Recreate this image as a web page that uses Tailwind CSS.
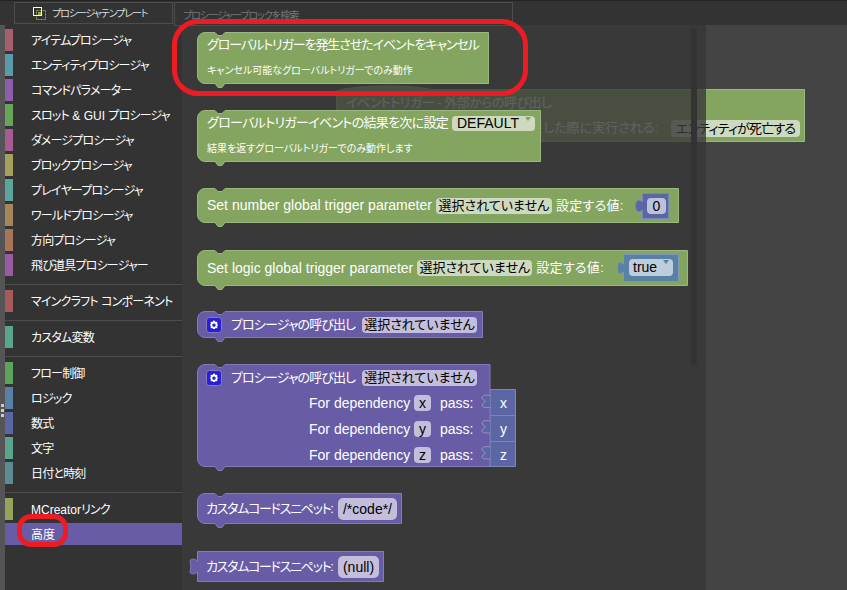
<!DOCTYPE html>
<html lang="ja">
<head>
    <meta charset="UTF-8">
    <title>Procedure blocks</title>
    <script src="https://cdn.jsdelivr.net/npm/@tailwindcss/browser@4"></script>
</head>
<body class="bg-[#333333] font-['Liberation_Sans','Noto_Sans_CJK_JP',sans-serif] [font-feature-settings:'palt']">
<div class="relative flex w-[847px] h-[590px] overflow-hidden">

    <!-- left strip -->
    <div class="relative w-[5px] shrink-0 bg-[#555555]">
        <div class="absolute left-[1px] top-[404px] flex flex-col gap-[2px]">
            <span class="block w-[3px] h-[3px] bg-[#cccccc]"></span>
            <span class="block w-[3px] h-[3px] bg-[#cccccc]"></span>
            <span class="block w-[3px] h-[3px] bg-[#cccccc]"></span>
        </div>
    </div>

    <!-- palette -->
    <div class="w-[177px] shrink-0 flex flex-col whitespace-pre text-white text-[12px] leading-[24px] tracking-[-0.8px]">
        <div class="h-[29px] shrink-0"></div>
        <div class="flex flex-col gap-[3px]">
            <div class="flex h-[22px]"><span class="w-[8px] shrink-0 bg-[#a5606b]"></span><span class="ml-[18px]">アイテムプロシージャ</span></div>
            <div class="flex h-[22px]"><span class="w-[8px] shrink-0 bg-[#5b9aa8]"></span><span class="ml-[18px]">エンティティプロシージャ</span></div>
            <div class="flex h-[22px]"><span class="w-[8px] shrink-0 bg-[#8c5fa8]"></span><span class="ml-[18px]">コマンドパラメーター</span></div>
            <div class="flex h-[22px]"><span class="w-[8px] shrink-0 bg-[#67a55b]"></span><span class="ml-[18px]">スロット<span class="tracking-normal"> &amp; GUI </span>プロシージャ</span></div>
            <div class="flex h-[22px]"><span class="w-[8px] shrink-0 bg-[#a55b93]"></span><span class="ml-[18px]">ダメージプロシージャ</span></div>
            <div class="flex h-[22px]"><span class="w-[8px] shrink-0 bg-[#a5a05b]"></span><span class="ml-[18px]">ブロックプロシージャ</span></div>
            <div class="flex h-[22px]"><span class="w-[8px] shrink-0 bg-[#5ba59b]"></span><span class="ml-[18px]">プレイヤープロシージャ</span></div>
            <div class="flex h-[22px]"><span class="w-[8px] shrink-0 bg-[#a5875b]"></span><span class="ml-[18px]">ワールドプロシージャ</span></div>
            <div class="flex h-[22px]"><span class="w-[8px] shrink-0 bg-[#a5745b]"></span><span class="ml-[18px]">方向プロシージャ</span></div>
            <div class="flex h-[22px]"><span class="w-[8px] shrink-0 bg-[#9a5ba5]"></span><span class="ml-[18px]">飛び道具プロシージャー</span></div>
        </div>
        <div class="h-px bg-[#4d4d4d] mt-[8px] mb-[5px]"></div>
        <div class="flex h-[22px]"><span class="w-[8px] shrink-0 bg-[#a55b5b]"></span><span class="ml-[18px]">マインクラフト<span class="tracking-normal"> </span>コンポーネント</span></div>
        <div class="h-px bg-[#4d4d4d] mt-[8px] mb-[5px]"></div>
        <div class="flex h-[22px]"><span class="w-[8px] shrink-0 bg-[#5ba58c]"></span><span class="ml-[18px]">カスタム変数</span></div>
        <div class="h-px bg-[#4d4d4d] mt-[8px] mb-[5px]"></div>
        <div class="flex flex-col gap-[3px]">
            <div class="flex h-[22px]"><span class="w-[8px] shrink-0 bg-[#5ba55b]"></span><span class="ml-[18px]">フロー制御</span></div>
            <div class="flex h-[22px]"><span class="w-[8px] shrink-0 bg-[#5b80a5]"></span><span class="ml-[18px]">ロジック</span></div>
            <div class="flex h-[22px]"><span class="w-[8px] shrink-0 bg-[#5b67a5]"></span><span class="ml-[18px]">数式</span></div>
            <div class="flex h-[22px]"><span class="w-[8px] shrink-0 bg-[#5ba58c]"></span><span class="ml-[18px]">文字</span></div>
            <div class="flex h-[22px]"><span class="w-[8px] shrink-0 bg-[#5b8c93]"></span><span class="ml-[18px]">日付と時刻</span></div>
        </div>
        <div class="h-px bg-[#4d4d4d] mt-[8px] mb-[5px]"></div>
        <div class="flex flex-col gap-[3px]">
            <div class="flex h-[22px]"><span class="w-[8px] shrink-0 bg-[#93a55b]"></span><span class="ml-[18px]"><span class="tracking-normal">MCreator</span>リンク</span></div>
            <div class="flex h-[22px] bg-[#675ca5]"><span class="w-[8px] shrink-0 bg-[#675ca5]"></span><span class="ml-[18px] tracking-normal">高度</span></div>
        </div>
    </div>

    <!-- workspace -->
    <div class="relative flex-1 bg-[#444444]">
        <div class="absolute left-0 top-[25px] w-[524px] h-[565px] bg-[#393939]"></div>

        <!-- block under the flyout -->
        <div class="absolute left-[154px] top-[89px] w-[469px] h-[53px] text-[13px] text-white whitespace-nowrap">
            <svg class="absolute inset-0 overflow-visible" width="469" height="53"><path d="M0.5,2 C20,-4 70,-5 96,0.5 H468.5 V52.5 H0.5 Z" fill="#83a55f" stroke="#9bb87e"/></svg>
            <span class="absolute left-[10px] top-[4px] tracking-[-0.5px]">イベントトリガー - 外部からの呼び出し</span>
            <span class="absolute right-[147px] top-[29px]">生した際に実行される:</span>
            <span class="absolute left-[335px] top-[31px] w-[129px] h-[17px] rounded-[4px] bg-[#cddabf] text-black text-center leading-[17px] tracking-[-0.8px]">エンティティが死亡する</span>
        </div>
        <!-- flyout dims what lies under it -->
        <div class="absolute left-0 top-[25px] w-[524px] h-[565px] bg-[#393939]/80"></div>
        <div class="absolute left-[509px] top-[28px] w-[6px] h-[337px] rounded-[3px] bg-[#333333]"></div>

        <!-- blocks -->
        <div class="absolute left-[15px] top-[32px] w-[292px] h-[52px] text-white whitespace-nowrap">
            <svg class="absolute inset-0 overflow-visible" width="292" height="52"><path d="M0.5,8 A7.5,7.5 0 0 1 8,0.5 H18 l3,3 h4 l3,-3 H291.5 V51.5 H28 l-3,4 h-4 l-3,-4 H8 A7.5,7.5 0 0 1 0.5,44 Z" fill="#83a55f" stroke="#9bb87e"/></svg>
            <span class="absolute left-[10px] top-[3px] text-[13px] tracking-[-1.1px]">グローバルトリガーを発生させたイベントをキャンセル</span>
            <span class="absolute left-[10px] top-[31px] text-[10px]">キャンセル可能なグローバルトリガーでのみ動作</span>
        </div>

        <div class="absolute left-[15px] top-[110px] w-[344px] h-[52px] text-white whitespace-nowrap">
            <svg class="absolute inset-0 overflow-visible" width="344" height="52"><path d="M0.5,8 A7.5,7.5 0 0 1 8,0.5 H18 l3,3 h4 l3,-3 H343.5 V51.5 H28 l-3,4 h-4 l-3,-4 H8 A7.5,7.5 0 0 1 0.5,44 Z" fill="#83a55f" stroke="#9bb87e"/></svg>
            <span class="absolute left-[10px] top-[3px] text-[13px] tracking-[-0.7px]">グローバルトリガーイベントの結果を次に設定</span>
            <span class="absolute left-[255px] top-[6px] w-[83px] h-[15px] rounded-[4px] bg-[#cddabf] text-black text-[14px] leading-[15px] pl-[5px]">DEFAULT<span class="absolute right-[4px] top-[1px] w-0 h-0 border-x-[3px] border-x-transparent border-t-[4px] border-t-[#83a55f]"></span></span>
            <span class="absolute left-[10px] top-[31px] text-[10px]">結果を返すグローバルトリガーでのみ動作します</span>
        </div>

        <div class="absolute left-[15px] top-[188px] w-[482px] h-[35px] flex items-center text-white text-[14px] whitespace-nowrap">
            <svg class="absolute inset-0 overflow-visible" width="482" height="35"><path d="M0.5,8 A7.5,7.5 0 0 1 8,0.5 H18 l3,3 h4 l3,-3 H481.5 V34.5 H28 l-3,4 h-4 l-3,-4 H8 A7.5,7.5 0 0 1 0.5,27 Z" fill="#83a55f" stroke="#9bb87e"/></svg>
            <span class="relative ml-[10px] shrink-0">Set number global trigger parameter</span>
            <span class="relative ml-[4px] w-[116px] h-[16px] shrink-0 rounded-[4px] bg-[#cddabf] text-black text-center text-[13px] leading-[16px]">選択されていません</span>
            <span class="relative ml-[4px] text-[13px] tracking-[0.3px]">設定する値:</span>
            <svg class="absolute left-[438px] top-[5px] overflow-visible" width="34" height="26"><path d="M7.5,0.5 H33.5 V25.5 H7.5 V17 C4,20 0.5,19 0.5,13 C0.5,7 4,6 7.5,9 Z" fill="#5b67a5" stroke="#7c85b7"/></svg>
            <span class="absolute left-[450px] top-[10px] w-[19px] h-[16px] rounded-[4px] bg-[#bdc2db] text-black text-center leading-[16px]">0</span>
        </div>

        <div class="absolute left-[15px] top-[250px] w-[491px] h-[36px] flex items-center text-white text-[14px] whitespace-nowrap">
            <svg class="absolute inset-0 overflow-visible" width="491" height="36"><path d="M0.5,8 A7.5,7.5 0 0 1 8,0.5 H18 l3,3 h4 l3,-3 H490.5 V35.5 H28 l-3,4 h-4 l-3,-4 H8 A7.5,7.5 0 0 1 0.5,28 Z" fill="#83a55f" stroke="#9bb87e"/></svg>
            <span class="relative ml-[10px] shrink-0">Set logic global trigger parameter</span>
            <span class="relative ml-[4px] w-[115px] h-[16px] shrink-0 rounded-[4px] bg-[#cddabf] text-black text-center text-[13px] leading-[16px]">選択されていません</span>
            <span class="relative ml-[4px] text-[13px] tracking-[0.3px]">設定する値:</span>
            <svg class="absolute left-[420px] top-[4px] overflow-visible" width="62" height="28"><path d="M6.5,0.5 H61.5 V27.5 H6.5 V18 C3,21 0.5,20 0.5,14 C0.5,8 3,7 6.5,10 Z" fill="#5b80a5" stroke="#7c99b7"/></svg>
            <span class="absolute left-[432px] top-[9px] w-[44px] h-[17px] rounded-[4px] bg-[#bdcddb] text-black leading-[17px] pl-[4px]">true<span class="absolute right-[4px] top-[1px] w-0 h-0 border-x-[3px] border-x-transparent border-t-[4px] border-t-[#5b80a5]"></span></span>
        </div>

        <div class="absolute left-[15px] top-[311px] w-[286px] h-[27px] flex items-center text-white text-[13px] whitespace-nowrap">
            <svg class="absolute inset-0 overflow-visible" width="286" height="27"><path d="M0.5,8 A7.5,7.5 0 0 1 8,0.5 H18 l3,3 h4 l3,-3 H285.5 V26.5 H28 l-3,4 h-4 l-3,-4 H8 A7.5,7.5 0 0 1 0.5,19 Z" fill="#675ca5" stroke="#857cb7"/></svg>
            <svg class="relative ml-[9px] shrink-0" width="16" height="16" viewBox="0 0 16 16"><rect x="0.5" y="0.5" width="15" height="15" rx="3" fill="#2a1fd8" stroke="#857cb7"/><path d="M8,3.6 l1.1,.3 .3,1.1 1.2,-.3 .9,.9 -.4,1.2 .9,1.2 -.9,1.2 .4,1.2 -.9,.9 -1.2,-.3 -.3,1.1 H6.9 l-.3,-1.1 -1.2,.3 -.9,-.9 .4,-1.2 -.9,-1.2 .9,-1.2 -.4,-1.2 .9,-.9 1.2,.3 .3,-1.1 Z M8,6.4 a1.7,1.7 0 1 0 .01,0 Z" fill="#ffffff" fill-rule="evenodd"/></svg>
            <span class="relative ml-[9px] w-[131px] shrink-0 tracking-[-0.9px]">プロシージャの呼び出し</span>
            <span class="relative w-[115px] h-[16px] shrink-0 rounded-[4px] bg-[#c2bedb] text-black text-center leading-[16px]">選択されていません</span>
        </div>

        <div class="absolute left-[15px] top-[364px] w-[319px] h-[103px] text-white text-[14px] whitespace-nowrap">
            <svg class="absolute inset-0 overflow-visible" width="319" height="103"><path d="M293,25.5 H318.5 V102.5 H293 Z" fill="#5b67a5" stroke="#7c85b7"/><path d="M293,51.5 H318.5 M293,77.5 H318.5" stroke="#7c85b7"/><path d="M0.5,8 A7.5,7.5 0 0 1 8,0.5 H18 l3,3 h4 l3,-3 H293 V102.5 H28 l-3,4 h-4 l-3,-4 H8 A7.5,7.5 0 0 1 0.5,95 Z" fill="#675ca5" stroke="#857cb7"/><path d="M293,31.5 C288,30.5 285,31.5 285,33.5 C285,36.5 288,35.5 288,37.5 C288,39.5 285,38.5 285,41.5 C285,43.5 288,43.5 293,43.5 M293,57 C288,56 285,57 285,59 C285,62 288,61 288,63 C288,65 285,64 285,67 C285,69 288,69 293,69 M293,83 C288,82 285,83 285,85 C285,88 288,87 288,89 C288,91 285,90 285,93 C285,95 288,95 293,95" fill="#5b67a5" stroke="#9a94c4"/></svg>
            <div class="relative flex items-center h-[26px] pt-[2px] text-[13px]">
                <svg class="ml-[9px] shrink-0" width="16" height="16" viewBox="0 0 16 16"><rect x="0.5" y="0.5" width="15" height="15" rx="3" fill="#2a1fd8" stroke="#857cb7"/><path d="M8,3.6 l1.1,.3 .3,1.1 1.2,-.3 .9,.9 -.4,1.2 .9,1.2 -.9,1.2 .4,1.2 -.9,.9 -1.2,-.3 -.3,1.1 H6.9 l-.3,-1.1 -1.2,.3 -.9,-.9 .4,-1.2 -.9,-1.2 .9,-1.2 -.4,-1.2 .9,-.9 1.2,.3 .3,-1.1 Z M8,6.4 a1.7,1.7 0 1 0 .01,0 Z" fill="#ffffff" fill-rule="evenodd"/></svg>
                <span class="ml-[9px] w-[131px] shrink-0 tracking-[-0.9px]">プロシージャの呼び出し</span>
                <span class="w-[115px] h-[16px] shrink-0 rounded-[4px] bg-[#c2bedb] text-black text-center leading-[16px]">選択されていません</span>
            </div>
            <div class="relative flex items-center h-[26px] pl-[112px]">
                <span class="w-[100px] shrink-0">For dependency</span><span class="ml-[5px] w-[17px] h-[16px] shrink-0 rounded-[4px] bg-[#c2bedb] text-black text-center leading-[16px]">x</span><span class="ml-[9px] w-[50px] shrink-0">pass:</span><span class="w-[26px] ml-[1px] text-center">x</span>
            </div>
            <div class="relative flex items-center h-[26px] pl-[112px]">
                <span class="w-[100px] shrink-0">For dependency</span><span class="ml-[5px] w-[17px] h-[16px] shrink-0 rounded-[4px] bg-[#c2bedb] text-black text-center leading-[16px]">y</span><span class="ml-[9px] w-[50px] shrink-0">pass:</span><span class="w-[26px] ml-[1px] text-center">y</span>
            </div>
            <div class="relative flex items-center h-[26px] pl-[112px]">
                <span class="w-[100px] shrink-0">For dependency</span><span class="ml-[5px] w-[17px] h-[16px] shrink-0 rounded-[4px] bg-[#c2bedb] text-black text-center leading-[16px]">z</span><span class="ml-[9px] w-[50px] shrink-0">pass:</span><span class="w-[26px] ml-[1px] text-center">z</span>
            </div>
        </div>

        <div class="absolute left-[15px] top-[493px] w-[205px] h-[31px] flex items-center text-white text-[13px] whitespace-nowrap">
            <svg class="absolute inset-0 overflow-visible" width="205" height="31"><path d="M0.5,8 A7.5,7.5 0 0 1 8,0.5 H18 l3,3 h4 l3,-3 H204.5 V30.5 H28 l-3,4 h-4 l-3,-4 H8 A7.5,7.5 0 0 1 0.5,23 Z" fill="#675ca5" stroke="#857cb7"/></svg>
            <span class="relative ml-[9px] w-[132px] shrink-0 tracking-[-1.3px]">カスタムコードスニペット:</span>
            <span class="relative w-[59px] h-[22px] shrink-0 rounded-[5px] bg-[#c2bedb] text-black text-center text-[14px] leading-[22px]">/*code*/</span>
        </div>

        <div class="absolute left-[15px] top-[551px] w-[187px] h-[31px] flex items-center text-white text-[13px] whitespace-nowrap">
            <svg class="absolute inset-0 overflow-visible" width="187" height="31"><path d="M0.5,0.5 H186.5 V30.5 H0.5 V21 C-3,24 -7,23 -7,21 C-6,18 -6,13 -7,10 C-7,8 -3,7 0.5,10 Z" fill="#675ca5" stroke="#857cb7"/></svg>
            <span class="relative ml-[9px] w-[132px] shrink-0 tracking-[-1.3px]">カスタムコードスニペット:</span>
            <span class="relative w-[41px] h-[22px] shrink-0 rounded-[5px] bg-[#c2bedb] text-black text-center text-[14px] leading-[22px]">(null)</span>
        </div>
    </div>

    <!-- toolbar -->
    <div class="absolute left-0 top-0 w-full h-[25px] bg-[#333333] border-t border-[#222222] flex items-start pt-[1px] pl-[5px] whitespace-nowrap">
        <div class="ml-[9px] w-[159px] h-[22px] shrink-0 border border-[#4d4d4d] pl-[18px] flex items-center gap-[6px] text-[#dddddd] text-[10px] tracking-[-1.1px]">
            <svg class="shrink-0" width="13" height="13" viewBox="0 0 13 13"><rect x="3.5" y="3.5" width="9" height="9" fill="none" stroke="#8ea843" stroke-dasharray="2 1"/><rect x="0.5" y="0.5" width="8" height="8" fill="none" stroke="#ffffff"/><rect x="5" y="5" width="3" height="3" fill="#8ea843"/></svg>
            <span>プロシージャテンプレート</span>
        </div>
        <div class="ml-px w-[339px] h-[24px] shrink-0 border border-[#4d4d4d] overflow-hidden pl-[8px] text-[#777777] text-[10px] tracking-[-1px] leading-[26px]">プロシージャーブロックを検索</div>
    </div>

    <!-- red marks drawn over the screenshot -->
    <div class="absolute left-[172px] top-[19px] w-[356px] h-[77px] rounded-[26px] border-[5px] border-[#ed1c24]"></div>
    <div class="absolute left-[17px] top-[514px] w-[51px] h-[33px] rounded-[14px] border-[5px] border-[#ed1c24]"></div>
</div>
</body>
</html>
